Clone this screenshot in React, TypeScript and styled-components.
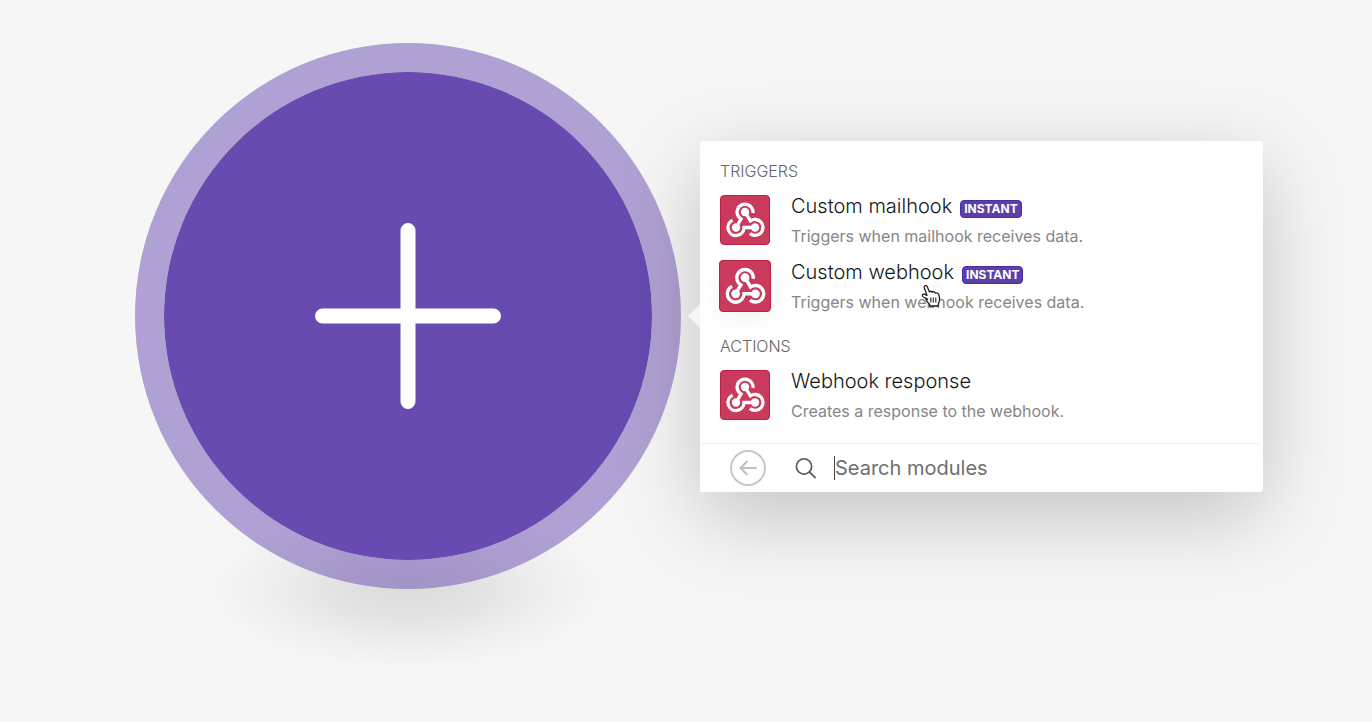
import React from "react";
import styled, { createGlobalStyle } from "styled-components";

const GlobalStyle = createGlobalStyle`
  *, *::before, *::after { box-sizing: border-box; }
  body {
    margin: 0;
    background: #f6f6f6;
    font-family: Inter, "Liberation Sans", sans-serif;
    color: #161616;
  }
  button, input { font: inherit; }
`;

const Canvas = styled.main`
  display: flex;
  align-items: center;
  gap: 19px;
  min-height: 100vh;
  padding: 0 109px 90px 135px;
  overflow: hidden;
`;

const Node = styled.div`
  position: relative;
  flex: none;
`;

const NodeShadow = styled.div`
  position: absolute;
  left: 76px;
  right: 76px;
  bottom: -80px;
  height: 160px;
  background: radial-gradient(
    closest-side,
    rgba(0, 0, 0, 0.11),
    rgba(0, 0, 0, 0.08) 35%,
    rgba(0, 0, 0, 0.03) 70%,
    transparent
  );
`;

const AddButton = styled.button`
  position: relative;
  display: grid;
  place-items: center;
  width: 546px;
  aspect-ratio: 1;
  padding: 0;
  border: 29px solid rgba(103, 75, 176, 0.5);
  border-radius: 50%;
  background: #674bb0;
  background-clip: padding-box;
  color: #fff;
`;

const Panel = styled.section`
  position: relative;
  flex: 1;
  min-width: 0;
  border-radius: 4px 4px 4px 0;
  background: #fff;
  box-shadow: 0 24px 84px rgba(0, 0, 0, 0.21);

  &::before {
    content: "";
    position: absolute;
    top: 50%;
    left: -12px;
    margin-top: -12px;
    border: solid transparent;
    border-width: 12px 12px 12px 0;
    border-right-color: #f5f5f5;
  }
`;

const Modules = styled.div`
  display: flex;
  flex-direction: column;
  gap: 17px;
  padding: 20px 20px 15px;
`;

const GroupTitle = styled.h2`
  margin: 0 0 6px;
  font-size: 16px;
  line-height: 20px;
  font-weight: 300;
  color: #666;
`;

const List = styled.ul`
  margin: 0;
  padding: 0;
  list-style: none;
`;

const Row = styled.button`
  display: flex;
  align-items: center;
  gap: 21px;
  width: 100%;
  height: 66px;
  padding: 0;
  border: 0;
  background: none;
  text-align: left;
  color: inherit;
`;

const Tile = styled.span<{ $active?: boolean }>`
  flex: none;
  display: block;
  width: 50px;
  height: 50px;
  border: 1px solid #b8213f;
  border-radius: 4px;
  background: #c93a5c;
  color: #fff;
  transform: ${(p) => (p.$active ? "scale(1.04)" : "none")};
  box-shadow: ${(p) => (p.$active ? "0 8px 28px rgba(0, 0, 0, 0.05)" : "none")};
`;

const RowText = styled.span`
  position: relative;
  display: flex;
  flex-direction: column;
  gap: 8px;
`;

const Name = styled.span`
  display: flex;
  align-items: baseline;
  gap: 8px;
  height: 24px;
  font-size: 20px;
  line-height: 24px;
  font-weight: 300;
`;

const Badge = styled.span`
  padding: 0 3px;
  border: 1px solid #4a2da0;
  border-radius: 4px;
  background: #5c40a8;
  color: #fff;
  font-size: 12px;
  line-height: 16px;
  font-weight: 700;
`;

const Description = styled.span`
  font-size: 16px;
  line-height: 20px;
  color: #868686;
`;

const Pointer = styled.svg`
  position: absolute;
  left: 130px;
  top: 24px;
`;

const SearchBar = styled.form`
  display: flex;
  align-items: center;
  height: 49px;
  margin-right: 4px;
  padding-left: 30px;
  border-top: 1px solid #f0f0f0;
`;

const BackButton = styled.button`
  display: grid;
  place-items: center;
  width: 36px;
  height: 36px;
  margin-right: 28px;
  padding: 0;
  border: 2px solid #c8c8c8;
  border-radius: 50%;
  background: none;
  color: #c0c0c0;
`;

const SearchLabel = styled.label`
  display: flex;
  flex: 1;
  align-items: center;
  min-width: 0;
  color: #626262;
`;

const Caret = styled.span`
  width: 1px;
  height: 24px;
  margin-left: 16px;
  background: #444;
`;

const SearchInput = styled.input`
  flex: 1;
  min-width: 0;
  padding: 0;
  border: 0;
  outline: 0;
  background: none;
  font-size: 20px;
  line-height: 24px;
  &::placeholder { color: #6e6e6e; opacity: 1; }
`;

const WebhookIcon = () => (
  <svg width="48" height="48" viewBox="1 1 48 48" fill="none" stroke="currentColor" strokeWidth="3.3" aria-hidden="true">
    <path d="M16 32.5 L21 24 A8 8 0 1 1 33 18" />
    <path d="M25 17 L30.4 25.9 A8 8 0 1 1 29.9 38.6" />
    <path d="M35 32.5 H24 A8 8 0 1 1 12.6 25.3" />
    <g fill="currentColor" stroke="none">
      <circle cx="25" cy="17" r="4.2" />
      <circle cx="16" cy="32.5" r="4.2" />
      <circle cx="35" cy="32.5" r="4.2" />
    </g>
  </svg>
);

const HandPointer = () => (
  <Pointer width="20" height="24" viewBox="0 0 20 24" aria-hidden="true">
    <path
      d="M6.6 15.2 L2.2 13 C.4 11.6 1.6 9.6 3.4 10.2 L6 11.4 L3.2 3.8 C2.6 1.4 5.4 .6 6.2 2.6 L8.4 8 C8.9 6.9 10.8 7 11.4 8.4 C12.1 7.4 13.9 7.6 14.4 9.1 C15.5 8.4 17.3 9 17.8 10.6 L18.6 14.5 C18.9 17 18.1 18.5 17.3 20 V22 H8.6 V20.4 C7.3 19 5.6 17.5 4.6 14.2 Z"
      fill="#fff"
      stroke="#222"
      strokeWidth="1.3"
      strokeLinejoin="round"
    />
    <path d="M9.8 13.5 V18.5 M12.3 13.5 V18.5 M14.8 13.5 V18.5" stroke="#222" strokeWidth="1.1" />
  </Pointer>
);

type Module = { name: string; description: string; instant?: boolean; active?: boolean };

const groups: { title: string; modules: Module[] }[] = [
  {
    title: "TRIGGERS",
    modules: [
      { name: "Custom mailhook", description: "Triggers when mailhook receives data.", instant: true },
      { name: "Custom webhook", description: "Triggers when webhook receives data.", instant: true, active: true },
    ],
  },
  {
    title: "ACTIONS",
    modules: [{ name: "Webhook response", description: "Creates a response to the webhook." }],
  },
];

export default function App() {
  return (
    <>
      <GlobalStyle />
      <Canvas>
        <Node>
          <NodeShadow />
          <AddButton type="button" aria-label="Add module">
            <svg width="186" height="186" viewBox="0 0 186 186" stroke="currentColor" strokeWidth="15" strokeLinecap="round" aria-hidden="true">
              <path d="M93 7.5V178.5M7.5 93H178.5" />
            </svg>
          </AddButton>
        </Node>
        <Panel aria-label="Modules">
          <Modules>
            {groups.map((group) => (
              <div key={group.title}>
                <GroupTitle>{group.title}</GroupTitle>
                <List>
                  {group.modules.map((m) => (
                    <li key={m.name}>
                      <Row type="button">
                        <Tile $active={m.active}>
                          <WebhookIcon />
                        </Tile>
                        <RowText>
                          <Name>
                            {m.name}
                            {m.instant && <Badge>INSTANT</Badge>}
                          </Name>
                          <Description>{m.description}</Description>
                          {m.active && <HandPointer />}
                        </RowText>
                      </Row>
                    </li>
                  ))}
                </List>
              </div>
            ))}
          </Modules>
          <SearchBar>
            <BackButton type="button" aria-label="Back">
              <svg width="18" height="16" viewBox="0 0 18 16" fill="none" stroke="currentColor" strokeWidth="2" strokeLinecap="round" strokeLinejoin="round" aria-hidden="true">
                <path d="M17 8H1.5M8 1.5L1.5 8L8 14.5" />
              </svg>
            </BackButton>
            <SearchLabel>
              <svg width="24" height="24" viewBox="0 0 24 24" fill="none" stroke="currentColor" strokeWidth="1.8" strokeLinecap="round" aria-hidden="true">
                <circle cx="10" cy="10.5" r="7.6" />
                <path d="M15.5 16L21 21.5" />
              </svg>
              <Caret />
              <SearchInput type="text" placeholder="Search modules" aria-label="Search modules" />
            </SearchLabel>
          </SearchBar>
        </Panel>
      </Canvas>
    </>
  );
}
